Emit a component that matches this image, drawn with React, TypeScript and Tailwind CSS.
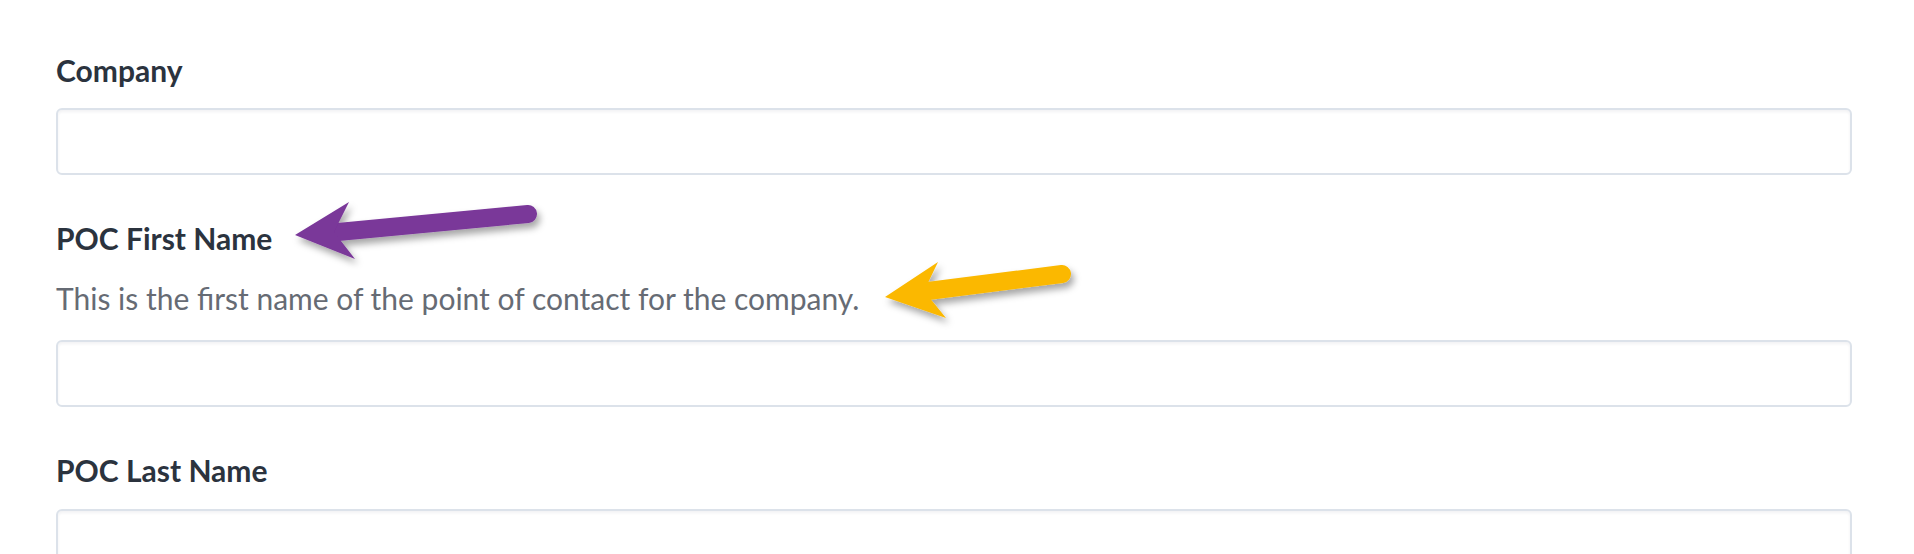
import React from 'react';

const labelCls =
  "block font-['Lato',sans-serif] font-bold text-[30px] leading-[32px] text-[#2b333e]";
const inputCls =
  'block w-full h-[67px] rounded-[6px] border-2 border-[#dce2ea] bg-white shadow-[inset_0_2px_3px_rgba(30,40,60,0.06)] outline-none';

function Arrow({
  color,
  tip,
  top,
  bottom,
  notch,
  from,
  to,
  id,
}: {
  color: string;
  tip: string;
  top: string;
  bottom: string;
  notch: string;
  from: [number, number];
  to: [number, number];
  id: string;
}) {
  return (
    <g filter={`url(#${id})`}>
      <line
        x1={from[0]}
        y1={from[1]}
        x2={to[0]}
        y2={to[1]}
        stroke={color}
        strokeWidth={18}
        strokeLinecap="round"
      />
      <polygon points={`${tip} ${top} ${notch} ${bottom}`} fill={color} />
    </g>
  );
}

export default function App() {
  return (
    <div className="relative w-[1914px] h-[554px] overflow-hidden bg-white">
      <form className="flex flex-col pl-[56px] pr-[62px] pt-[54px]">
        <label className={labelCls}>Company</label>
        <input className={`${inputCls} mt-[22px]`} />

        <label className={`${labelCls} mt-[47px]`}>POC First Name</label>
        <p className="mt-[28px] font-['Lato',sans-serif] text-[30px] leading-[32px] text-[#666b74]">
          This is the first name of the point of contact for the company.
        </p>
        <input className={`${inputCls} mt-[26px]`} />

        <label className={`${labelCls} mt-[47px]`}>POC Last Name</label>
        <input className={`${inputCls} mt-[23px]`} />
      </form>

      {/* annotation arrows */}
      <svg
        className="absolute left-0 top-0 pointer-events-none"
        width={1914}
        height={554}
        viewBox="0 0 1914 554"
      >
        <defs>
          <filter id="shadowP" x="-20%" y="-50%" width="140%" height="200%">
            <feDropShadow dx="3" dy="5" stdDeviation="3.5" floodColor="#000" floodOpacity="0.35" />
          </filter>
          <filter id="shadowY" x="-20%" y="-50%" width="140%" height="200%">
            <feDropShadow dx="3" dy="5" stdDeviation="3.5" floodColor="#000" floodOpacity="0.35" />
          </filter>
        </defs>
        <Arrow
          id="shadowP"
          color="#7a3799"
          tip="295,235"
          top="349,202"
          notch="334,232"
          bottom="355,259"
          from={[338, 232]}
          to={[528, 214]}
        />
        <Arrow
          id="shadowY"
          color="#fbb800"
          tip="885,297"
          top="938,262"
          notch="924,291"
          bottom="946,318"
          from={[928, 291]}
          to={[1062, 274]}
        />
      </svg>
    </div>
  );
}
